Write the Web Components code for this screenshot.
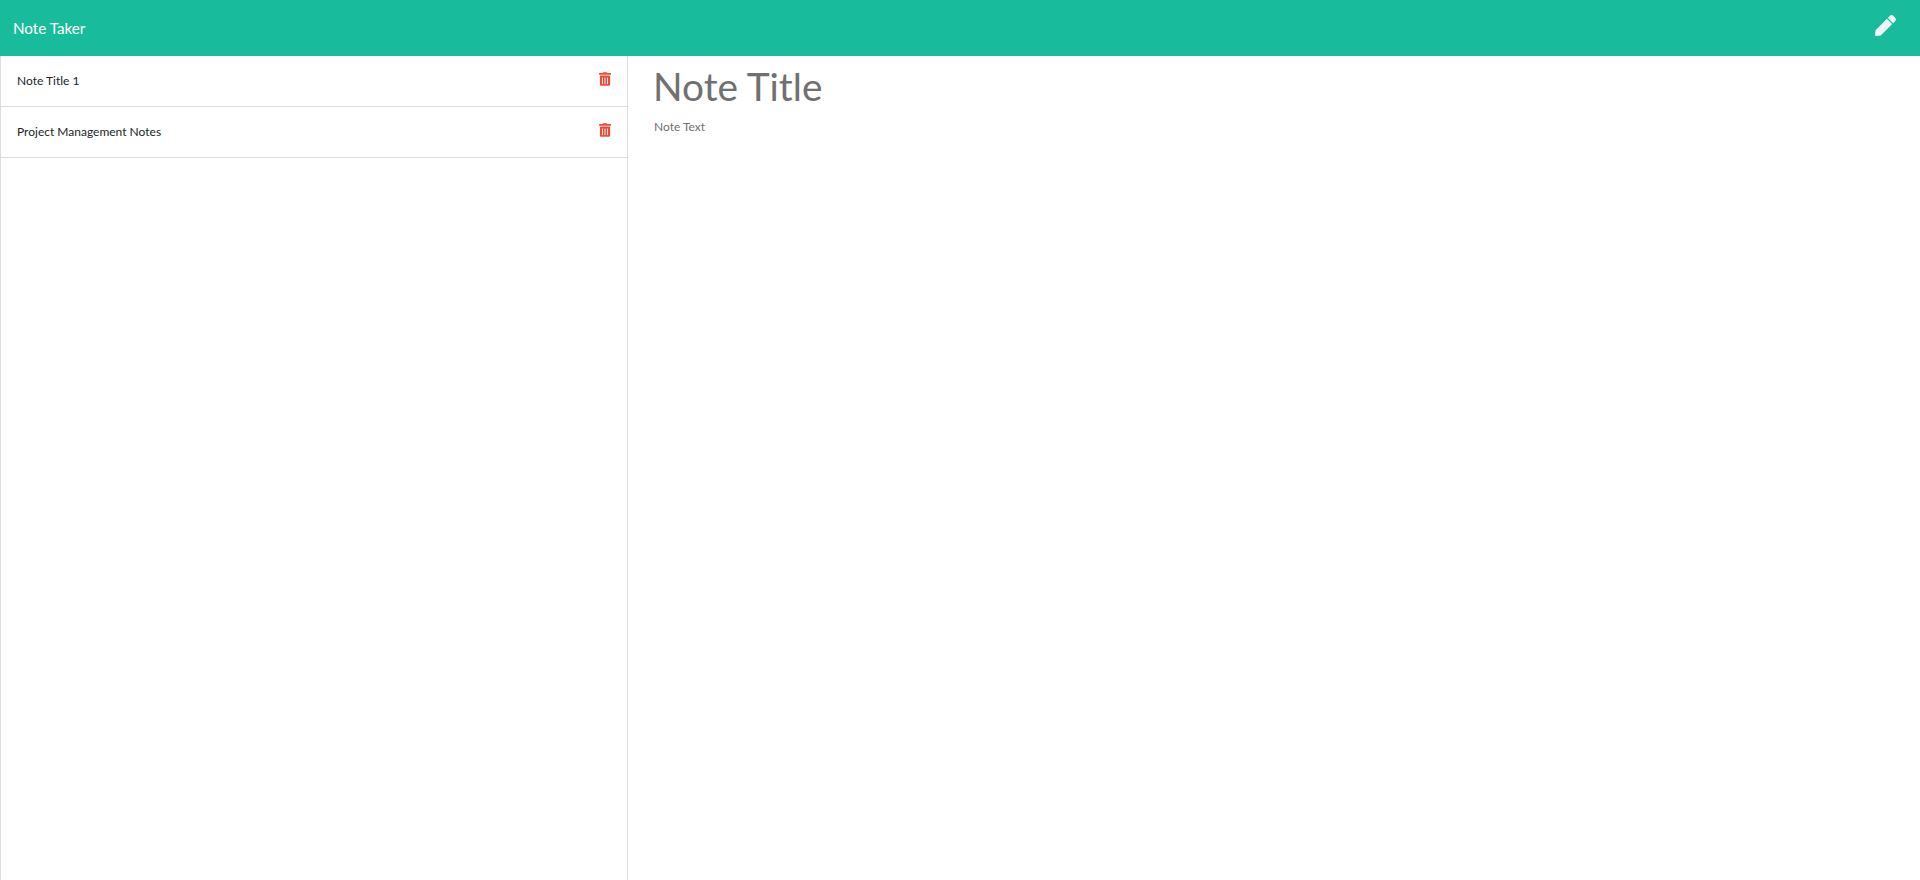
<!DOCTYPE html>
<html lang="en">
<head>
<meta charset="utf-8">
<title>Note Taker</title>
<style>
    html, body { margin: 0; height: 100%; background: #fff; }
    body { font-family: Lato, "Open Sans", sans-serif; overflow: hidden; }
</style>
</head>
<body>
<note-app>
    <note-navbar slot="nav">Note Taker</note-navbar>
    <note-item slot="list">Note Title 1</note-item>
    <note-item slot="list">Project Management Notes</note-item>
    <note-editor slot="editor" heading="Note Title" text="Note Text"></note-editor>
</note-app>

<script>
class NoteApp extends HTMLElement {
    constructor() {
        super();
        this.attachShadow({ mode: "open" });
        this.shadowRoot.innerHTML = `
            <style>
                :host {
                    display: flex;
                    flex-direction: column;
                    height: 880px;
                }
                .row {
                    flex: 1;
                    display: grid;
                    grid-template-columns: 628px 1fr;
                    min-height: 0;
                }
                .list {
                    border-left: 1px solid #ddd;
                    border-right: 1px solid #ddd;
                    display: flex;
                    flex-direction: column;
                }
            </style>
            <slot name="nav"></slot>
            <div class="row">
                <div class="list"><slot name="list"></slot></div>
                <slot name="editor"></slot>
            </div>
        `;
    }
}

class NoteNavbar extends HTMLElement {
    constructor() {
        super();
        this.attachShadow({ mode: "open" });
        this.shadowRoot.innerHTML = `
            <style>
                :host {
                    display: flex;
                    align-items: center;
                    justify-content: space-between;
                    height: 56px;
                    padding: 0 13px;
                    background-color: #18bc9c;
                    color: #fff;
                    font-size: 15.2px;
                }
                span {
                    margin-bottom: 1px;
                }
                svg {
                    width: 21px;
                    height: 21px;
                    fill: #f2f5f7;
                    margin: 0 11px 5px 0;
                }
            </style>
            <span><slot></slot></span>
            <svg viewBox="0 0 512 512" aria-label="new note">
                <path d="M290.74 93.24l128.02 128.02-277.99 277.99-114.14 12.6C11.35 513.54-1.56 500.62.14 485.34l12.7-114.22 277.9-277.88zm207.2-19.06l-60.11-60.11c-18.75-18.75-49.16-18.75-67.91 0l-56.55 56.55 128.02 128.02 56.55-56.55c18.75-18.76 18.75-49.16 0-67.91z"/>
            </svg>
        `;
    }
}

class NoteItem extends HTMLElement {
    constructor() {
        super();
        this.attachShadow({ mode: "open" });
        this.shadowRoot.innerHTML = `
            <style>
                :host {
                    display: flex;
                    align-items: center;
                    justify-content: space-between;
                    height: 50px;
                    padding: 0 16px 0 16px;
                    border-bottom: 1px solid #ddd;
                    color: #212529;
                    font-size: 12px;
                }
                span {
                    margin-bottom: 2px;
                }
                svg {
                    width: 12px;
                    height: 14px;
                    fill: #e74c3c;
                    margin-bottom: 4px;
                }
            </style>
            <span><slot></slot></span>
            <svg viewBox="0 0 448 512" aria-label="delete note">
                <path d="M32 464a48 48 0 0 0 48 48h288a48 48 0 0 0 48-48V128H32zm272-256a16 16 0 0 1 32 0v224a16 16 0 0 1-32 0zm-96 0a16 16 0 0 1 32 0v224a16 16 0 0 1-32 0zm-96 0a16 16 0 0 1 32 0v224a16 16 0 0 1-32 0zM432 32H312l-9.4-18.7A24 24 0 0 0 281.1 0H166.8a23.72 23.72 0 0 0-21.4 13.3L136 32H16A16 16 0 0 0 0 48v32a16 16 0 0 0 16 16h416a16 16 0 0 0 16-16V48a16 16 0 0 0-16-16z"/>
            </svg>
        `;
    }
}

class NoteEditor extends HTMLElement {
    constructor() {
        super();
        this.attachShadow({ mode: "open" });
        this.shadowRoot.innerHTML = `
            <style>
                :host {
                    display: flex;
                    flex-direction: column;
                    padding: 0 26px;
                    color: #707070;
                }
                .title {
                    font-size: 38.8px;
                    line-height: 48px;
                    margin: 6px 0 0 -1px;
                }
                .text {
                    font-size: 12px;
                    line-height: 16px;
                    margin-top: 9px;
                }
            </style>
            <div class="title">${this.getAttribute("heading")}</div>
            <div class="text">${this.getAttribute("text")}</div>
        `;
    }
}

customElements.define("note-app", NoteApp);
customElements.define("note-navbar", NoteNavbar);
customElements.define("note-item", NoteItem);
customElements.define("note-editor", NoteEditor);
</script>
</body>
</html>
